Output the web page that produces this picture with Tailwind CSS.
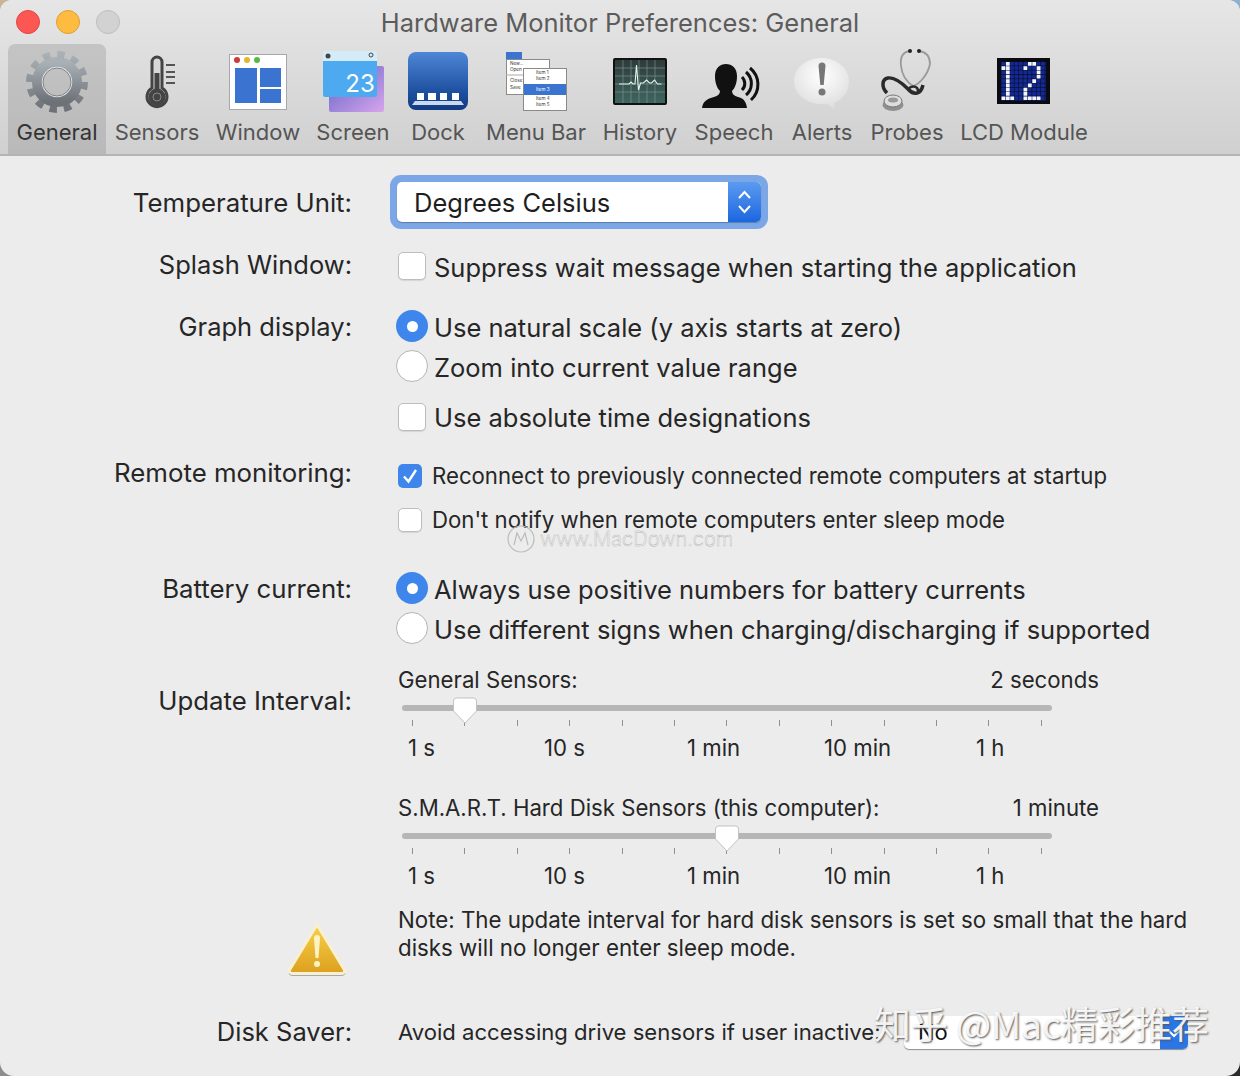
<!DOCTYPE html>
<html lang="en">
<head>
    <meta charset="UTF-8">
    <meta name="viewport" content="width=device-width, initial-scale=1.0">
    <title>Hardware Monitor Preferences: General</title>
    <script src="https://cdn.jsdelivr.net/npm/@tailwindcss/browser@4"></script>
</head>
<body class="bg-[#2a2a2a] font-['Inter','Noto_Sans',sans-serif] overflow-hidden">
    <!-- desktop showing through the rounded corners -->
    <div class="absolute left-0 top-0 w-[14px] h-[14px] bg-[#c9b493]"></div>
    <div class="absolute right-0 top-0 w-[14px] h-[14px] bg-[#8fb0cf]"></div>
    <div class="absolute left-0 bottom-0 w-[14px] h-[14px] bg-[#8c8c8c]"></div>

    <div class="relative w-[1240px] h-[1076px] bg-[#ececec] rounded-t-[12px] rounded-b-[14px] overflow-hidden text-[#262626]">

        <!-- toolbar -->
        <div class="h-[156px] bg-gradient-to-b from-[#e6e6e6] to-[#d0d0d0] border-b-2 border-[#b4b4b4]">
            <div class="relative h-[44px] flex items-center justify-center">
                <div class="absolute left-[16px] top-[10px] flex gap-[16px]">
                    <div class="w-[24px] h-[24px] rounded-full bg-[#fc5753] border border-[#df4744]"></div>
                    <div class="w-[24px] h-[24px] rounded-full bg-[#fdbc40] border border-[#de9f34]"></div>
                    <div class="w-[24px] h-[24px] rounded-full bg-[#d2d2d2] border border-[#bdbdbd]"></div>
                </div>
                <div class="text-[25.5px] text-[#5c5c5c] pt-[2px]">Hardware Monitor Preferences: General</div>
            </div>
            <div class="flex pl-[8px] text-[22px] text-[#555555]">
                <div class="w-[98px] h-[110px] flex flex-col items-center rounded-t-[7px] bg-gradient-to-b from-[#c4c4c4] to-[#b9b9b9] text-[#333333]">
                    <svg width="70" height="70" viewBox="0 0 70 70">
                        <defs>
                            <linearGradient id="gear" x1="0" y1="0" x2="0" y2="1"><stop offset="0" stop-color="#aab1b6"/><stop offset="1" stop-color="#6c7277"/></linearGradient>
                        </defs>
                        <circle cx="35" cy="38" r="27.5" fill="none" stroke="url(#gear)" stroke-width="7" stroke-dasharray="7.4 7"/>
                        <circle cx="35" cy="38" r="19.500" fill="none" stroke="url(#gear)" stroke-width="11"/>
                        <circle cx="35" cy="38" r="14.500" fill="none" stroke="#dfe3e6" stroke-width="1.500"/>
                        <circle cx="35" cy="38" r="14" fill="none" stroke="#6a7074" stroke-width="0.800"/>
                    </svg>
                    <span class="leading-[36px]">General</span>
                </div>
                <div class="w-[102px] h-[110px] flex flex-col items-center">
                    <svg width="70" height="70" viewBox="0 0 70 70">
                        <path d="M30 44V18a5 5 0 0 1 10 0V44a10 10 0 1 1-10 0z" fill="#d8d8d8" stroke="#444444" stroke-width="3"/>
                        <rect x="32.5" y="29" width="5" height="16" fill="#444444"/>
                        <circle cx="35" cy="53" r="8.500" fill="#444444"/>
                        <circle cx="35" cy="53" r="4" fill="none" stroke="#888888"/>
                        <path d="M44 21h9M44 28h9M44 33h9M44 39h9" stroke="#555555" stroke-width="2"/>
                    </svg>
                    <span class="leading-[36px]">Sensors</span>
                </div>
                <div class="w-[100px] h-[110px] flex flex-col items-center">
                    <svg width="70" height="70" viewBox="0 0 70 70">
                        <rect x="6.5" y="10.5" width="57" height="55" fill="#ffffff" stroke="#a8a8a8"/>
                        <circle cx="14" cy="16" r="3" fill="#cf3a36"/>
                        <circle cx="24" cy="16" r="3" fill="#e0b82f"/>
                        <circle cx="34" cy="16" r="3" fill="#57b845"/>
                        <rect x="12" y="24" width="22" height="35" fill="#3b74d0"/>
                        <rect x="37" y="24" width="21" height="19" fill="#3b74d0"/>
                        <rect x="37" y="45" width="21" height="14" fill="#3b74d0"/>
                    </svg>
                    <span class="leading-[36px]">Window</span>
                </div>
                <div class="w-[90px] h-[110px] flex flex-col items-center">
                    <svg width="70" height="70" viewBox="0 0 70 70">
                        <defs>
                            <linearGradient id="purple" x1="0" y1="0" x2="1" y2="1"><stop offset="0" stop-color="#5d63c4"/><stop offset="1" stop-color="#d8a4ec"/></linearGradient>
                        </defs>
                        <rect x="11" y="22" width="55" height="46" rx="2" fill="url(#purple)"/>
                        <path d="M5 17V9a2 2 0 0 1 2-2H57a2 2 0 0 1 2 2V17z" fill="#d4ebf8"/>
                        <path d="M5 17H59V51a2 2 0 0 1-2 2H7a2 2 0 0 1-2-2z" fill="#4da9f0"/>
                        <circle cx="10" cy="12" r="2.5" fill="#444444"/>
                        <circle cx="53" cy="11" r="2" fill="none" stroke="#444444"/>
                        <text x="42" y="48" text-anchor="middle" font-size="24" fill="#ffffff" font-family="Inter">23</text>
                    </svg>
                    <span class="leading-[36px]">Screen</span>
                </div>
                <div class="w-[80px] h-[110px] flex flex-col items-center">
                    <svg width="70" height="70" viewBox="0 0 70 70">
                        <defs>
                            <linearGradient id="dock" x1="0" y1="0" x2="0" y2="1"><stop offset="0" stop-color="#4f86d6"/><stop offset="0.7" stop-color="#1d4f9f"/><stop offset="1" stop-color="#123a80"/></linearGradient>
                        </defs>
                        <rect x="5" y="8" width="60" height="58" rx="8" fill="url(#dock)"/>
                        <rect x="14" y="49" width="7" height="7" fill="#ffffff"/>
                        <rect x="25" y="49" width="8" height="7" fill="#ffffff"/>
                        <rect x="37" y="49" width="7" height="7" fill="#ffffff"/>
                        <rect x="49" y="49" width="7" height="7" fill="#ffffff"/>
                        <path d="M12 57H58L61 61H9z" fill="#c9d9ee"/>
                    </svg>
                    <span class="leading-[36px]">Dock</span>
                </div>
                <div class="w-[116px] h-[110px] flex flex-col items-center">
                    <svg width="70" height="70" viewBox="0 0 70 70" font-family="Inter" font-size="4.6" fill="#333333">
                        <rect x="5" y="8" width="16" height="7" fill="#3b74d0"/>
                        <rect x="5.5" y="15.5" width="43" height="35" fill="#ffffff" stroke="#8a8a8a"/>
                        <text x="9" y="21">New...</text>
                        <text x="9" y="27">Open</text>
                        <path d="M5 31H22" stroke="#aaaaaa"/>
                        <text x="9" y="38">Close</text>
                        <text x="9" y="45">Save</text>
                        <rect x="22.5" y="24.5" width="43" height="42" fill="#ffffff" stroke="#8a8a8a"/>
                        <text x="35" y="30">Item 1</text>
                        <text x="35" y="36">Item 2</text>
                        <rect x="23" y="40" width="42" height="11" fill="#3b74d0"/>
                        <text x="35" y="47" fill="#ffffff">Item 3</text>
                        <text x="35" y="56">Item 4</text>
                        <text x="35" y="62">Item 5</text>
                    </svg>
                    <span class="leading-[36px]">Menu Bar</span>
                </div>
                <div class="w-[92px] h-[110px] flex flex-col items-center">
                    <svg width="70" height="70" viewBox="0 0 70 70">
                        <defs>
                            <linearGradient id="scope" x1="0" y1="0" x2="0" y2="1"><stop offset="0" stop-color="#2f3b3b"/><stop offset="1" stop-color="#3f6560"/></linearGradient>
                        </defs>
                        <rect x="8" y="14" width="54" height="47" rx="2" fill="#111111"/>
                        <rect x="10" y="16" width="50" height="43" fill="url(#scope)"/>
                        <path d="M10 24H60M10 32H60M10 40H60M10 48H60M18 16V59M26 16V59M34 16V59M42 16V59M50 16V59" stroke="#7f9a94" stroke-width="0.6"/>
                        <path d="M14 40h10l2-2 2 2h2l1.5-19 2 25 2-7h3l3-3 3 3 2 0 3-3 3 4h4" fill="none" stroke="#e4f4ee" stroke-width="1.1"/>
                    </svg>
                    <span class="leading-[36px]">History</span>
                </div>
                <div class="w-[96px] h-[110px] flex flex-col items-center">
                    <svg width="70" height="70" viewBox="0 0 70 70">
                        <path d="M3 64c1-7 5-9 12-11 4-1 6-3 6-6-3-3-5-8-5-15 0-8 5-12 11-12s11 4 11 12c0 7-2 12-5 15 0 3 2 5 6 6 5 1 8 4 9 11z" fill="#111111"/>
                        <path d="M43 33a9 9 0 0 1 0 13M47 28a15 15 0 0 1 0 23M51 24a21 21 0 0 1 1 32" fill="none" stroke="#111111" stroke-width="3"/>
                    </svg>
                    <span class="leading-[36px]">Speech</span>
                </div>
                <div class="w-[80px] h-[110px] flex flex-col items-center">
                    <svg width="70" height="70" viewBox="0 0 70 70">
                        <defs>
                            <radialGradient id="bubble" cx="0.5" cy="0.35" r="0.7"><stop offset="0" stop-color="#ffffff"/><stop offset="1" stop-color="#dcdcdc"/></radialGradient>
                        </defs>
                        <path d="M34.5 14c15 0 27.500 10 27.500 23 0 11-7 19-15 22l1 6c-3-2-6-4-9-5.500-1.500.3-3 .500-4.500.500-15 0-27.500-10-27.500-23s12.500-23 27.500-23z" fill="url(#bubble)"/>
                        <path d="M31.500 22a3.500 3.500 0 0 1 7 0l-1.800 19h-3.400z" fill="#777777"/>
                        <circle cx="35" cy="48" r="3.500" fill="#777777"/>
                    </svg>
                    <span class="leading-[36px]">Alerts</span>
                </div>
                <div class="w-[90px] h-[110px] flex flex-col items-center">
                    <svg width="70" height="70" viewBox="0 0 70 70" fill="none">
                        <path d="M38 7C30 8 28 14 29 22 30 32 35 38 41 42 48 40 56 30 58 20 58 12 54 8 47 7" stroke="#9a9a9a" stroke-width="1.800"/>
                        <circle cx="38" cy="7" r="2" fill="#222222"/>
                        <circle cx="47" cy="7" r="2" fill="#222222"/>
                        <path d="M51 41C49 50 42 52 36 45 30 39 22 33 16 34 10 35 9 43 15 49" stroke="#2a2a2a" stroke-width="3.500"/>
                        <path d="M36 45C40 41 46 42 46 47" stroke="#2a2a2a" stroke-width="2.500"/>
                        <ellipse cx="21" cy="61" rx="10.500" ry="6" fill="#8f8f8f"/>
                        <ellipse cx="21" cy="57" rx="9" ry="6" fill="#dddddd" stroke="#777777"/>
                        <ellipse cx="21" cy="56" rx="5" ry="2.500" fill="#999999"/>
                    </svg>
                    <span class="leading-[36px]">Probes</span>
                </div>
                <div class="w-[144px] h-[110px] flex flex-col items-center">
                    <svg width="70" height="70" viewBox="0 0 70 70">
                        <defs>
                            <pattern id="lcdgrid" x="12.500" y="18" width="4.400" height="4.300" patternUnits="userSpaceOnUse">
                                <rect width="3.800" height="3.700" fill="#12299a"/>
                            </pattern>
                        </defs>
                        <rect x="8" y="14" width="53" height="46" fill="#0a0a12"/>
                        <rect x="12" y="18" width="45" height="39" fill="url(#lcdgrid)"/>
                        <!-- lit pixels: the digits 1 and 2 -->
                        <path stroke="#f2f4ff" stroke-width="3.700" fill="none" d="M16.900 19.850h3.800M16.900 24.150h3.800M12.500 24.150h3.800M16.900 28.450h3.800M16.900 32.750h3.800M16.900 37.050h3.800M16.900 41.350h3.800M16.900 45.650h3.800M16.900 49.950h3.800M12.500 54.250h3.800M16.900 54.250h3.800M21.300 54.250h3.800"/>
                        <path stroke="#f2f4ff" stroke-width="3.700" fill="none" d="M38.900 19.850h3.800M43.300 19.850h3.800M34.500 24.150h3.800M47.700 24.150h3.800M47.700 28.450h3.800M47.700 32.750h3.800M43.300 37.050h3.800M38.900 41.350h3.800M34.500 45.650h3.800M34.500 49.950h3.800M34.500 54.250h3.800M38.900 54.250h3.800M43.300 54.250h3.800M47.700 54.250h3.800"/>
                    </svg>
                    <span class="leading-[36px]">LCD Module</span>
                </div>
            </div>
        </div>

        <!-- form -->
        <div class="text-[25.5px]">
            <div class="flex items-center mt-[19px] h-[54px]">
                <div class="w-[352px] text-right text-[25.8px] pt-[2px]">Temperature Unit:</div>
                <div class="ml-[38px] w-[378px] h-[54px] rounded-[11px] bg-[#7ba7e6] p-[7px]">
                    <div class="h-full flex items-center justify-between bg-white rounded-[5px] overflow-hidden shadow-[0_1px_1px_#00000040]">
                        <span class="pl-[17px] pt-[2px] text-[#1e1e1e]">Degrees Celsius</span>
                        <div class="w-[33px] h-full bg-gradient-to-b from-[#5b9af0] to-[#1a66e0] flex items-center justify-center">
                            <svg width="17" height="30" viewBox="0 0 17 30" fill="none" stroke="#ffffff" stroke-width="2"><path d="M3 11l5.500-6 5.500 6M3 19l5.500 6 5.500-6"/></svg>
                        </div>
                    </div>
                </div>
            </div>

            <div class="flex mt-[22px] h-[30px]">
                <div class="w-[352px] text-right leading-[28px]">Splash Window:</div>
                <div class="ml-[46px] flex items-center gap-[8px]">
                    <div class="w-[28px] h-[28px] rounded-[5px] bg-white border border-[#bdbdbd] shadow-[0_1px_1px_#0000001a]"></div>
                    <span class="pt-[4px]">Suppress wait message when starting the application</span>
                </div>
            </div>

            <div class="flex mt-[25px]">
                <div class="w-[352px] text-right leading-[42px]">Graph display:</div>
                <div class="ml-[44px]">
                    <div class="flex items-center h-[40px] gap-[6px]">
                        <div class="w-[32px] h-[32px] rounded-full bg-[#3f86ec] flex items-center justify-center"><div class="w-[11px] h-[11px] rounded-full bg-white"></div></div>
                        <span class="pt-[4px]">Use natural scale (y axis starts at zero)</span>
                    </div>
                    <div class="flex items-center h-[40px] gap-[6px]">
                        <div class="w-[32px] h-[32px] rounded-full bg-white border border-[#b5b5b5]"></div>
                        <span class="pt-[4px]">Zoom into current value range</span>
                    </div>
                    <div class="flex items-center h-[30px] mt-[16px] gap-[8px] pl-[2px]">
                        <div class="w-[28px] h-[28px] rounded-[5px] bg-white border border-[#bdbdbd] shadow-[0_1px_1px_#0000001a]"></div>
                        <span class="pt-[2px]">Use absolute time designations</span>
                    </div>
                </div>
            </div>

            <div class="flex mt-[24px]">
                <div class="w-[352px] text-right text-[25.8px] leading-[34px]">Remote monitoring:</div>
                <div class="ml-[46px] text-[22.2px]">
                    <div class="flex items-center h-[40px] gap-[10px]">
                        <div class="w-[24px] h-[24px] rounded-[5px] bg-[#3f86ec] flex items-center justify-center">
                            <svg width="18" height="18" viewBox="0 0 18 18" fill="none" stroke="#ffffff" stroke-width="2.400"><path d="M3 9.500l4.500 5L15 3"/></svg>
                        </div>
                        <span>Reconnect to previously connected remote computers at startup</span>
                    </div>
                    <div class="flex items-center h-[40px] mt-[4px] gap-[10px]">
                        <div class="w-[24px] h-[24px] rounded-[5px] bg-white border border-[#bdbdbd] shadow-[0_1px_1px_#0000001a]"></div>
                        <span>Don't notify when remote computers enter sleep mode</span>
                    </div>
                </div>
            </div>

            <div class="flex mt-[28px]">
                <div class="w-[352px] text-right text-[25.8px] leading-[42px]">Battery current:</div>
                <div class="ml-[44px]">
                    <div class="flex items-center h-[40px] gap-[6px]">
                        <div class="w-[32px] h-[32px] rounded-full bg-[#3f86ec] flex items-center justify-center"><div class="w-[11px] h-[11px] rounded-full bg-white"></div></div>
                        <span class="pt-[4px]">Always use positive numbers for battery currents</span>
                    </div>
                    <div class="flex items-center h-[40px] gap-[6px]">
                        <div class="w-[32px] h-[32px] rounded-full bg-white border border-[#b5b5b5]"></div>
                        <span class="pt-[4px]">Use different signs when charging/discharging if supported</span>
                    </div>
                </div>
            </div>

            <div class="flex mt-[17px]">
                <div class="w-[352px] text-right text-[25.8px] pt-[21px] leading-[30px]">Update Interval:</div>
                <div class="ml-[46px] w-[701px] text-[22.2px]">
                    <div class="flex justify-between h-[30px] leading-[30px]"><span>General Sensors:</span><span>2 seconds</span></div>
                    <div class="relative h-[6px] w-[650px] ml-[4px] mt-[10px] rounded-full bg-[#b6b6b6]">
                        <svg class="absolute left-[50px] top-[-8px]" width="26" height="28" viewBox="0 0 26 28"><path d="M1.500 4a3 3 0 0 1 3-3h17a3 3 0 0 1 3 3v10L13 26 1.500 14z" fill="#ffffff" stroke="#c2c2c2"/></svg>
                    </div>
                    <div class="flex justify-between w-[630px] ml-[14px] mt-[9px]">
                        <i class="w-[1px] h-[6px] bg-[#909090]"></i><i class="w-[1px] h-[6px] bg-[#909090]"></i><i class="w-[1px] h-[6px] bg-[#909090]"></i><i class="w-[1px] h-[6px] bg-[#909090]"></i><i class="w-[1px] h-[6px] bg-[#909090]"></i><i class="w-[1px] h-[6px] bg-[#909090]"></i><i class="w-[1px] h-[6px] bg-[#909090]"></i><i class="w-[1px] h-[6px] bg-[#909090]"></i><i class="w-[1px] h-[6px] bg-[#909090]"></i><i class="w-[1px] h-[6px] bg-[#909090]"></i><i class="w-[1px] h-[6px] bg-[#909090]"></i><i class="w-[1px] h-[6px] bg-[#909090]"></i><i class="w-[1px] h-[6px] bg-[#909090]"></i>
                    </div>
                    <div class="flex pl-[10px] mt-[7px] h-[30px] leading-[30px]">
                        <span class="w-[136px]">1 s</span><span class="w-[143px]">10 s</span><span class="w-[137px]">1 min</span><span class="w-[152px]">10 min</span><span>1 h</span>
                    </div>

                    <div class="flex justify-between h-[30px] leading-[30px] mt-[30px]"><span>S.M.A.R.T. Hard Disk Sensors (this computer):</span><span>1 minute</span></div>
                    <div class="relative h-[6px] w-[650px] ml-[4px] mt-[10px] rounded-full bg-[#b6b6b6]">
                        <svg class="absolute left-[312px] top-[-8px]" width="26" height="28" viewBox="0 0 26 28"><path d="M1.500 4a3 3 0 0 1 3-3h17a3 3 0 0 1 3 3v10L13 26 1.500 14z" fill="#ffffff" stroke="#c2c2c2"/></svg>
                    </div>
                    <div class="flex justify-between w-[630px] ml-[14px] mt-[9px]">
                        <i class="w-[1px] h-[6px] bg-[#909090]"></i><i class="w-[1px] h-[6px] bg-[#909090]"></i><i class="w-[1px] h-[6px] bg-[#909090]"></i><i class="w-[1px] h-[6px] bg-[#909090]"></i><i class="w-[1px] h-[6px] bg-[#909090]"></i><i class="w-[1px] h-[6px] bg-[#909090]"></i><i class="w-[1px] h-[6px] bg-[#909090]"></i><i class="w-[1px] h-[6px] bg-[#909090]"></i><i class="w-[1px] h-[6px] bg-[#909090]"></i><i class="w-[1px] h-[6px] bg-[#909090]"></i><i class="w-[1px] h-[6px] bg-[#909090]"></i><i class="w-[1px] h-[6px] bg-[#909090]"></i><i class="w-[1px] h-[6px] bg-[#909090]"></i>
                    </div>
                    <div class="flex pl-[10px] mt-[7px] h-[30px] leading-[30px]">
                        <span class="w-[136px]">1 s</span><span class="w-[143px]">10 s</span><span class="w-[137px]">1 min</span><span class="w-[152px]">10 min</span><span>1 h</span>
                    </div>
                </div>
            </div>

            <div class="flex mt-[15px]">
                <div class="w-[352px] flex justify-end pr-[4px] pt-[14px]">
                    <svg width="62" height="58" viewBox="0 0 62 58">
                        <defs>
                            <linearGradient id="warn" x1="0" y1="0" x2="0" y2="1"><stop offset="0" stop-color="#f8d24a"/><stop offset="1" stop-color="#dca01e"/></linearGradient>
                        </defs>
                        <path d="M31 4.500L58.500 50a2.500 2.500 0 0 1-2 3.500H5.500a2.500 2.500 0 0 1-2-3.500z" fill="url(#warn)" stroke="#f7f0d4" stroke-width="3" stroke-linejoin="round"/>
                        <path d="M3 53.500q1 2 3 2H56q2 0 3-2" fill="none" stroke="#a8a8a8" stroke-width="1"/>
                        <path d="M28 18a3 3 0 0 1 6 0l-1.500 20h-3z" fill="#fbf3c4"/>
                        <circle cx="31" cy="44" r="3" fill="#fbf3c4"/>
                    </svg>
                </div>
                <div class="ml-[46px] w-[800px] text-[22.3px] leading-[28px]">Note: The update interval for hard disk sensors is set so small that the hard disks will no longer enter sleep mode.</div>
            </div>

            <div class="flex items-center absolute left-0 top-[1014px] h-[37px]">
                <div class="w-[352px] text-right">Disk Saver:</div>
                <div class="ml-[46px] w-[506px] text-[22.1px]">Avoid accessing drive sensors if user inactive:</div>
                <div class="w-[284px] h-[33px] bg-white rounded-[5px] shadow-[0_1px_1px_#00000066] flex justify-between overflow-hidden text-[22px]">
                    <span class="pl-[14px] leading-[33px] text-[#111111]">No</span>
                    <div class="w-[28px] h-full bg-[#2a76e6] flex items-center justify-center">
                        <svg width="16" height="10" viewBox="0 0 16 10" fill="none" stroke="#ffffff" stroke-width="2"><path d="M2 2l6 6 6-6"/></svg>
                    </div>
                </div>
            </div>
        </div>

        <!-- watermarks -->
        <div class="absolute left-[507px] top-[524px] flex items-center gap-[5px] text-[20px] font-light text-white/40 [-webkit-text-stroke:0.4px_#b4b4b4]">
            <svg width="28" height="28" viewBox="0 0 28 28" fill="none" stroke="#bbbbbb" stroke-width="1.200"><circle cx="14" cy="14" r="13"/><path d="M7 20L10 8l4 8 4-8 3 12"/></svg>
            <span>www.MacDown.com</span>
        </div>
        <div class="absolute left-[874px] top-[1001px] text-[37px] leading-[44px] whitespace-nowrap text-white/90 font-['Noto_Sans_CJK_SC','Noto_Sans',sans-serif] [text-shadow:1px_1px_2px_#555555]">知乎 @Mac精彩推荐</div>
    </div>
</body>
</html>
